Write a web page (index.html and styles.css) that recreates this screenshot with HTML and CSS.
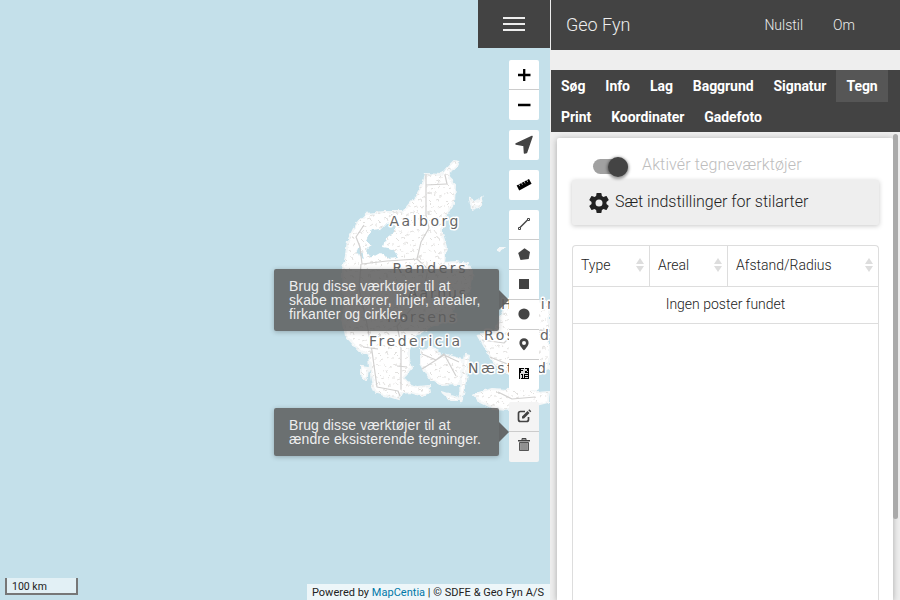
FILE: index.html
```
<!DOCTYPE html>
<html lang="da">
<head>
<meta charset="utf-8">
<title>Geo Fyn</title>
<link rel="stylesheet" href="styles.css">
</head>
<body>
<main class="map">
  <svg class="basemap" viewBox="0 0 550 600" aria-hidden="true">
    <defs>
      <pattern id="specks" width="17" height="19" patternUnits="userSpaceOnUse">
        <path d="M1 3l3-1 1 2M8 1l2 3M13 6l3-2v2M3 10l3 3M9 9l3-1 1 3M15 14l-3 2M5 17l3-1M1 14v2" fill="none" stroke="#e2e1df" stroke-width="1"/>
      </pattern>
      <filter id="coast" x="-5%" y="-5%" width="110%" height="110%" color-interpolation-filters="sRGB">
        <feTurbulence type="fractalNoise" baseFrequency=".16" numOctaves="2" seed="4"/>
        <feDisplacementMap in="SourceGraphic" scale="5" xChannelSelector="R" yChannelSelector="G"/>
      </filter>
      <path id="land" d="M448 165L453 160L458 161L456 165L450 168L447 177L454 184L453 202L447 212L441 220L441 232L445 246L443 262L455 261L467 263L472 271L469 289L455 298L449 320L430 326L420 332L413 334L408 348L408 358L411 367L403 376L409 384L417 386L428 385L429 392L422 395L409 391L401 392L397 398L388 395L375 392L372 386L369 367L368 354L358 349L345 335L342 318L343 300L342 268L345 255L347 240L355 223L365 213L383 211L402 211L413 198L422 182L425 173L440 174z
      M420 349L430 347L442 353L462 359L463 371L457 383L440 384L428 376L420 362z
      M477 334L495 330L499 316L506 304L520 306L528 297L540 301H548V368L542 370L530 377L514 379L504 369L492 361L485 348z
      M473 393L491 388L508 389L526 386L536 391L548 390L547 401L535 404L525 412L509 409L494 408L480 401z
      M469 198l7 3 5-4-2 7-8 3zM495 247l7 0-3 2zM464 353l4 1-3 26-5 22-1-20zM441 391l16 5 2 3-9 0zM360 366l8 1-3 11-5-4z"/>
    </defs>
    <g filter="url(#coast)" transform="translate(1 1)">
      <use href="#land" fill="#fff" stroke="#f4f7f8" stroke-width="2"/>
      <use href="#land" fill="url(#specks)"/>
      <path class="water" d="M370 229l10-1 5-5 9-1-1 9-9 7-2 8 10 2 5 8-11 1-7-5-9 5-5-7 6-6-6-5zM355 247l4-1 4 12-5-2zM512 325l8 5 4 18-5 2-5-13z"/>
    </g>
    <path class="roads" d="M445 175l2 9-21 1v30l3 13-8 14-4 17 11 10-5 25-11 14-15 18 4 18v45M426 174v11l20-1M417 259l-30 2-25 3-2-17-4-10 8-12M361 264l-2 25 7 30 6 32 5 36 21 4 2 5M378 349l-15-2M422 354l14 6 8-6 12 22M422 369l22-14 15 7M397 366l10 1M482 340l22 3 15-15 28 3M490 357l22 9M498 392l14 7 23-2"/>
    <g class="cities">
      <text x="389.500" y="226" textLength="69">Aalborg</text>
      <text x="392.500" y="273" textLength="73">Randers</text>
      <text x="408" y="298" textLength="58">Aarhus</text>
      <text x="387" y="322" textLength="69">Horsens</text>
      <text x="369" y="346" textLength="91">Fredericia</text>
      <text x="501" y="309" textLength="66">Helsing</text>
      <text x="484" y="340" textLength="65">Roskild</text>
      <text x="468" y="373" textLength="78">Næstved</text>
    </g>
  </svg>

  <button class="menu-button" aria-label="Menu"><i></i><i></i><i></i></button>

  <div class="controls">
    <div class="group">
      <button><svg viewBox="0 0 30 30"><path d="M9 15h12.500M15.200 9v12" stroke="#000" stroke-width="2.300"/></svg></button>
      <button><svg viewBox="0 0 30 30"><path d="M9 15h12.500" stroke="#000" stroke-width="2.300"/></svg></button>
    </div>
    <div class="group">
      <button><svg viewBox="0 0 30 30"><path d="M23 6.500L7 14l8 1.500L15.500 23l2-.5z" stroke="#444" stroke-width="1.500" stroke-linejoin="round"/></svg></button>
    </div>
    <div class="group">
      <button><svg viewBox="0 0 30 30"><g transform="rotate(-28 15 14.500)"><path d="M8 12h14v5.500H8z" fill="#000"/><path d="M10.500 11.500v2.500M13.500 11.500v2.500M16.500 11.500v2.500M19.500 11.500v2.500" stroke="#fff" stroke-width=".6"/></g></svg></button>
    </div>
    <div class="group draw">
      <button><svg viewBox="0 0 30 30"><path d="M11 17.500l7.500-7.500" stroke="#444" stroke-width="1.500"/><path d="M9.500 17.500h2v2h-2zM18.500 8.500h2v2h-2z" fill="#fff" stroke="#444"/></svg></button>
      <button><svg viewBox="0 0 30 30"><path d="M15.500 8.200L21 12l-1.300 7-8.200 1-2.300-7z"/></svg></button>
      <button><svg viewBox="0 0 30 30"><path d="M10 9h10v10H10z"/></svg></button>
      <button><svg viewBox="0 0 30 30"><circle cx="15" cy="14" r="5.600"/></svg></button>
      <button><svg viewBox="0 0 30 30"><path fill-rule="evenodd" d="M15 8.200a4.600 4.600 0 0 0-4.600 4.700C10.400 16 15 20.300 15 20.300s4.600-4.300 4.600-7.400A4.600 4.600 0 0 0 15 8.200zm0 2.800a2 2 0 1 1 0 4 2 2 0 0 1 0-4z"/></svg></button>
      <button><svg viewBox="0 0 30 30" shape-rendering="crispEdges"><path d="M10 8h10v11H10z" fill="#ddd"/><path d="M10 8h1v11h-1zM19 8h1v11h-1zM11 8h4v1h-4zM11 10h3v1h-3zM11 8h1v5h-1zM16 8h3v1h-3zM18 9h1v2h-1zM16 11h2v1h-2zM16 12h3v1h-3zM13 14h1v4h-1zM12 14h1v1h-1zM12 18h3v1h-3zM15 14h4v1h-4zM15 16h4v1h-4zM15 18h4v1h-4zM15 14h1v5h-1z" fill="#000"/></svg></button>
      <div class="tip tip-draw">Brug disse værktøjer til at<br>skabe markører, linjer, arealer,<br>firkanter og cirkler.</div>
    </div>
    <div class="group edit">
      <button><svg viewBox="0 0 30 30"><path d="M16 9.500h-4.500a2 2 0 0 0-2 2v6a2 2 0 0 0 2 2h6a2 2 0 0 0 2-2V15" fill="none" stroke="#444" stroke-width="1.700"/><path d="M13 14.500l5.500-5.500 2 2-5.500 5.500H13zM19.300 8.300l1-1 2 2-1 1z"/></svg></button>
      <button><svg viewBox="0 0 30 30"><path d="M13 6.500h4v1.500h-4z" fill="none" stroke="#444"/><path d="M9 8.700h12" stroke="#444" stroke-width="1.500"/><path d="M10.500 10.500h9v8h-9z" fill="#999" stroke="#555"/><path d="M13 11v7M15 11v7M17 11v7" stroke="#888"/></svg></button>
      <div class="tip tip-edit">Brug disse værktøjer til at<br>ændre eksisterende tegninger.</div>
    </div>
  </div>

  <footer class="map-foot">
    <div class="scale">100 km</div>
    <div class="attribution">Powered by <a>MapCentia</a> | © SDFE &amp; Geo Fyn A/S</div>
  </footer>
</main>

<aside class="side">
  <header class="navbar"><span class="brand">Geo Fyn</span><a>Nulstil</a><a>Om</a></header>
  <nav class="tabs"><a>Søg</a><a>Info</a><a>Lag</a><a>Baggrund</a><a>Signatur</a><a class="active">Tegn</a><a>Print</a><a>Koordinater</a><a>Gadefoto</a></nav>
  <div class="content">
    <section class="card">
      <label class="toggle"><span class="track"><span class="knob"></span></span>Aktivér tegneværktøjer</label>
      <button class="settings"><svg viewBox="0 0 24 24"><path d="M19.430 12.980c.04-.32.07-.64.07-.98s-.03-.66-.07-.98l2.110-1.650c.19-.15.24-.42.12-.64l-2-3.460c-.12-.22-.39-.3-.61-.22l-2.490 1c-.52-.4-1.080-.73-1.690-.98l-.38-2.650A.49.49 0 0 0 14 2h-4c-.25 0-.46.18-.49.42l-.38 2.650c-.61.25-1.170.59-1.690.98l-2.490-1c-.23-.09-.49 0-.61.22l-2 3.460c-.13.22-.07.49.12.64l2.110 1.650c-.04.32-.07.65-.07.98s.03.66.07.98l-2.110 1.650c-.19.15-.24.42-.12.64l2 3.460c.12.22.39.3.61.22l2.490-1c.52.4 1.080.73 1.690.98l.38 2.650c.03.24.24.42.49.42h4c.25 0 .46-.18.49-.42l.38-2.650c.61-.25 1.170-.59 1.690-.98l2.490 1c.23.09.49 0 .61-.22l2-3.460c.12-.22.07-.49-.12-.64zM12 15.500a3.500 3.500 0 1 1 0-7 3.500 3.500 0 0 1 0 7z"/></svg><span>Sæt indstillinger for stilarter</span></button>
      <div class="table">
        <div class="thead">
          <div>Type<i class="sort"></i></div><div>Areal<i class="sort"></i></div><div>Afstand/Radius<i class="sort"></i></div>
        </div>
        <div class="empty">Ingen poster fundet</div>
      </div>
    </section>
    <div class="scrollbar"></div>
  </div>
</aside>
</body>
</html>
```
FILE: styles.css
```
* { box-sizing: border-box; }
body {
  margin: 0;
  height: 600px;
  display: flex;
  overflow: hidden;
  font: 300 14px/20px Roboto, sans-serif;
  color: #222;
}
button { border: 0; padding: 0; margin: 0; font: inherit; color: inherit; }

.map {
  position: relative;
  width: 550px;
  height: 600px;
  display: flex;
  flex-direction: column;
  align-items: flex-end;
  background: #c4e0ea;
}
.basemap { position: absolute; inset: 0; width: 550px; height: 600px; }
.water { fill: #c4e0ea; }
.roads { fill: none; stroke: #d2d1d0; stroke-width: 1.2; stroke-linejoin: round; }
.cities text {
  font: 14px "DejaVu Sans", sans-serif;
  fill: #666;
  stroke: #fff;
  stroke-width: 3px;
  stroke-linejoin: round;
  paint-order: stroke;
}
.menu-button {
  position: relative;
  width: 72px;
  height: 48px;
  display: flex;
  flex-direction: column;
  align-items: center;
  justify-content: center;
  gap: 4px;
  background: #434343;
}
.menu-button i { width: 22px; height: 2px; background: #eee; }

.controls {
  position: relative;
  display: flex;
  flex-direction: column;
  gap: 10px;
  margin: 12px 11px 0 0;
}
.group { position: relative; width: 30px; }
.group button {
  display: block;
  width: 30px;
  height: 30px;
  background: #fff;
  border-bottom: 1px solid #ccc;
  overflow: hidden;
}
.group button:first-child { border-radius: 2px 2px 0 0; }
.group button:last-of-type { border-bottom: 0; border-radius: 0 0 2px 2px; }
.group button:only-of-type { border-radius: 2px; }
.group svg { display: block; width: 30px; height: 30px; fill: #444; }
.edit { margin-top: 2px; }
.edit button { background: #f4f4f4; }
.tip {
  position: absolute;
  right: 40px;
  width: 225px;
  padding: 10px 15px;
  border-radius: 2px;
  background: rgba(92, 92, 92, .85);
  box-shadow: 0 1px 5px rgba(0, 0, 0, .25);
  color: #eee;
  font: 14px/14px "Liberation Sans", sans-serif;
  letter-spacing: .1px;
  white-space: nowrap;
}
.tip::after {
  content: "";
  position: absolute;
  left: 100%;
  top: 50%;
  margin-top: -10px;
  border: 10px solid transparent;
  border-left-color: rgba(92, 92, 92, .9);
  border-right: 0;
}
.tip-draw { top: 59px; height: 62px; }
.tip-edit { top: 6px; height: 48px; }

.map-foot {
  position: relative;
  width: 550px;
  margin-top: auto;
  display: flex;
  justify-content: space-between;
  align-items: flex-end;
  font: 400 11px/16px Roboto, sans-serif;
}
.scale {
  width: 73px;
  height: 17px;
  margin: 0 0 5px 5px;
  padding-left: 5px;
  border: 2px solid #777;
  border-top: 0;
  background: rgba(255, 255, 255, .5);
  font-size: 10.5px;
  line-height: 17px;
}
.attribution {
  height: 16px;
  padding: 0 6px 0 5px;
  background: rgba(255, 255, 255, .7);
  line-height: 17px;
  letter-spacing: .02px;
}
.attribution a { color: #0078a8; }

.side {
  width: 350px;
  height: 600px;
  display: flex;
  flex-direction: column;
  border-left: 1px solid #eee;
  background: #eee;
}
.navbar {
  height: 50px;
  display: flex;
  align-items: center;
  gap: 30px;
  padding: 0 45px 0 15px;
  background: #434343;
  color: #eee;
}
.brand { margin-right: auto; font-size: 18px; }
.tabs {
  height: 62px;
  margin-top: 20px;
  display: flex;
  flex-wrap: wrap;
  align-content: flex-start;
  background: #434343;
  color: #fff;
  font-weight: 700;
  letter-spacing: -.06px;
}
.tabs a { height: 31px; padding: 6px 10px; }
.tabs .active { height: 32px; margin-bottom: -1px; background: #565656; }

.content { flex: 1; min-height: 0; display: flex; padding: 6px 2px 0 6px; }
.card {
  width: 336px;
  height: 462px;
  display: flex;
  flex-direction: column;
  padding: 12px 14px 0 15px;
  border-radius: 2px 2px 0 0;
  background: #fff;
  box-shadow: 0 1px 6px rgba(0, 0, 0, .3);
}
.toggle {
  height: 30px;
  flex: none;
  display: flex;
  align-items: center;
  gap: 14px;
  padding: 0 0 0 21px;
  font-size: 16px;
  letter-spacing: .13px;
  color: #bdbdbd;
}
.track {
  position: relative;
  width: 35px;
  height: 15px;
  margin-top: 2px;
  border-radius: 8px;
  background: #a1a1a1;
}
.knob {
  position: absolute;
  right: 0;
  top: -2px;
  width: 20px;
  height: 20px;
  border-radius: 50%;
  background: #444;
  box-shadow: 0 1px 3px 1px rgba(0, 0, 0, .4);
}
.settings {
  height: 45px;
  flex: none;
  display: flex;
  align-items: center;
  gap: 4px;
  padding: 0 0 0 15px;
  border-radius: 2px;
  background: #eee;
  box-shadow: 0 1px 5px rgba(0, 0, 0, .22);
  font-size: 16px;
}
.settings span { margin-bottom: 2px; }
.settings svg { width: 24px; height: 24px; fill: #222; }
.table {
  flex: 1;
  margin-top: 20px;
  border: 1px solid #ddd;
  border-bottom: 0;
  border-radius: 4px 4px 0 0;
}
.thead { height: 41px; display: grid; grid-template-columns: 77px 78px 1fr; border-bottom: 1px solid #ddd; }
.thead div {
  display: flex;
  align-items: center;
  justify-content: space-between;
  padding: 0 5px 2px 8px;
  border-right: 1px solid #ddd;
}
.thead div:last-child { border-right: 0; }
.sort { display: flex; flex-direction: column; gap: 2px; }
.sort::before, .sort::after { content: ""; border: 4px solid transparent; }
.sort::before { border-top: 0; border-bottom: 6px solid #ddd; }
.sort::after { border-bottom: 0; border-top: 6px solid #ddd; }
.empty { height: 37px; padding-top: 7px; border-bottom: 1px solid #ddd; text-align: center; }
.scrollbar { width: 5px; height: 385px; margin-top: -4px; border-radius: 3px; background: #aaa; z-index: 1; }
```
